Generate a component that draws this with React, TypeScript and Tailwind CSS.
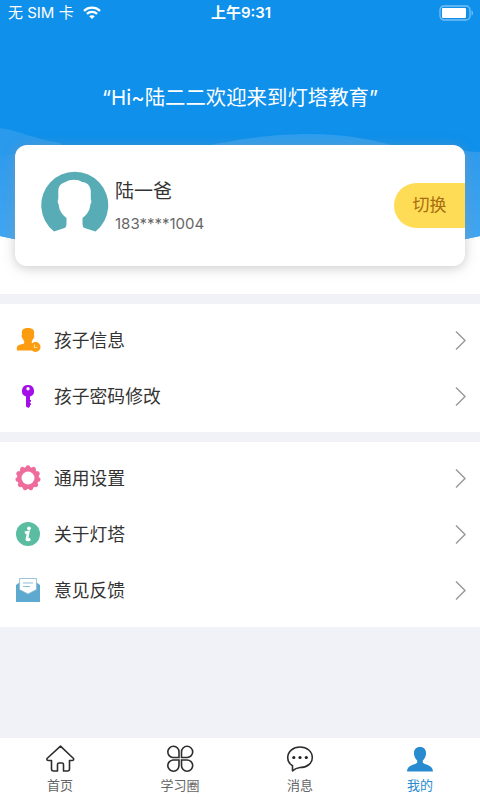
import type { ReactNode } from "react";

interface MenuItem {
  label: string;
  icon: ReactNode;
}

interface TabItem {
  label: string;
  icon: ReactNode;
  active?: boolean;
}

function WifiIcon() {
  return (
    <svg width="18" height="14" viewBox="0 0 18 14" fill="none">
      <path d="M1 4.8C5.5 0.6 12.5 0.6 17 4.8" stroke="#fff" strokeWidth="2.3" />
      <path d="M3.9 7.9C6.8 5.2 11.2 5.2 14.1 7.9" stroke="#fff" strokeWidth="2.2" />
      <path d="M9 13L6.2 10.2C7.8 8.8 10.2 8.8 11.8 10.2Z" fill="#fff" />
    </svg>
  );
}

function BatteryIcon() {
  return (
    <svg width="35" height="16" viewBox="0 0 35 16" fill="none">
      <rect x="1" y="1" width="30" height="14" rx="4" stroke="#79bff5" strokeWidth="1.3" />
      <rect x="3" y="3" width="24" height="10" rx="1" fill="#fff" />
      <path d="M32.5 5.5C34.5 6 34.5 10 32.5 10.5Z" fill="#79bff5" />
    </svg>
  );
}

function HeaderWaves() {
  return (
    <svg className="absolute left-0 top-0" width="480" height="260" viewBox="0 0 480 260">
      <defs>
        <linearGradient id="wave" x1="0" y1="150" x2="0" y2="240" gradientUnits="userSpaceOnUse">
          <stop offset="0" stopColor="#2e9bee" />
          <stop offset="1" stopColor="#42a6f1" />
        </linearGradient>
      </defs>
      <path d="M0 0H480V236Q240 290 0 236Z" fill="#0f90eb" />
      <path d="M0 128C20 131 35 139 60 143L80 160H0Z" fill="#2a9aed" />
      <path d="M205 146C250 137 280 134 310 134C345 134 370 139 395 146Z" fill="#2f9eee" />
      <path d="M0 156Q12 154 30 153L450 148Q465 152 480 152V236Q240 290 0 236Z" fill="url(#wave)" />
    </svg>
  );
}

function Avatar() {
  return (
    <svg width="68" height="70" viewBox="0 0 68 70">
      <path
        d="M13 60.5A33.5 33.5 0 1 1 54.5 60.5L43.5 57Q41.5 56 41.5 53V47Q46 44 48.5 38L49.5 33Q51 31 49.8 28V20C49.3 14 46 11.5 41 11C37 8 29 8 24.500 11C19 12.500 17.500 16 17.300 20V28Q16 31 17.500 33L18.500 38Q21 44 25.500 47V53Q25.500 56 23.500 57Z"
        fill="#58acb5"
      />
    </svg>
  );
}

function ChildIcon() {
  return (
    <svg width="26" height="26" viewBox="0 0 26 26">
      <path
        d="M7 7C6 2.5 9 1 13 1C17.5 1 20 3 19 7.5C20 10 18.5 11 17.5 13Q16 15 17 16.5L23 18.5V23.5H2Q1 19 4 18L9 16.5Q10 15 8.5 13C7.5 11 6 10 7 7Z"
        fill="#fc9c10"
      />
      <circle cx="20.5" cy="20" r="5" fill="#fc9c10" />
      <path d="M19.5 17.5V20.5H22.5" stroke="#ffd890" strokeWidth="1.2" fill="none" />
    </svg>
  );
}

function KeyIcon() {
  return (
    <svg width="26" height="26" viewBox="0 0 26 26">
      <path
        fillRule="evenodd"
        d="M13 2A5.9 5.9 0 0 1 15 13.5V23.5L13.4 25L11 23.5V13.5A5.9 5.9 0 0 1 13 2ZM13 4A1.7 1.7 0 1 0 13 7.4A1.7 1.7 0 1 0 13 4Z"
        fill="#a40fe8"
      />
      <path d="M15 17h1v1.8h-1zM15 20.2h1V22h-1z" fill="#a40fe8" />
    </svg>
  );
}

function GearIcon() {
  const teeth = Array.from({ length: 11 }, (_, i) => (i * 360) / 11);
  return (
    <svg width="26" height="26" viewBox="0 0 26 26">
      <circle cx="13" cy="13" r="8.7" fill="none" stroke="#ee6c9c" strokeWidth="4.4" />
      {teeth.map((angle) => (
        <circle key={angle} cx="13" cy="2.6" r="2.3" fill="#ee6c9c" transform={`rotate(${angle} 13 13)`} />
      ))}
    </svg>
  );
}

function InfoIcon() {
  return (
    <svg width="26" height="26" viewBox="0 0 26 26">
      <circle cx="13" cy="13" r="12" fill="#5abca0" />
      <circle cx="14" cy="7.3" r="1.9" fill="#fff" />
      <path d="M9.8 11.8L13.3 11L11.8 18.5Q12.3 19.6 15.3 18" stroke="#fff" strokeWidth="2.6" fill="none" />
    </svg>
  );
}

function MailIcon() {
  return (
    <svg width="26" height="26" viewBox="0 0 26 26">
      <path d="M1 8L5 5V1.5H21V5L25 8V25H1Z" fill="#5ea9cf" />
      <path d="M4.5 1.5H21.5V12.5L13 17L4.5 12.5Z" fill="#fff" stroke="#8cb9cf" strokeWidth="0.8" />
      <path d="M8 6H18M8 9.5H15" stroke="#8cbdd7" strokeWidth="1.2" />
    </svg>
  );
}

function Chevron() {
  return (
    <svg width="12" height="20" viewBox="0 0 12 20" fill="none">
      <path d="M1 1.5L10 10.5L1 19.5" stroke="#9c9c9c" strokeWidth="1.5" />
    </svg>
  );
}

function HomeIcon() {
  return (
    <svg width="30" height="30" viewBox="0 0 30 30" fill="none" stroke="#2d2d2d" strokeWidth="1.6" strokeLinejoin="round">
      <path d="M15.5 2.2L28.5 14.5Q29 16.500 27 16.500H24.500V25Q24.500 27 22.500 27H18.500V20.500Q18.500 19 17 19H14Q12.500 19 12.500 20.500V27H8.500Q6.500 27 6.500 25V16.500H3.500Q1.500 16.500 2 14.500Z" />
    </svg>
  );
}

function CloverIcon() {
  return (
    <svg width="30" height="30" viewBox="0 0 30 30" fill="none" stroke="#2d2d2d" strokeWidth="1.6">
      <path d="M14 13.5H8A5.6 5.6 0 1 1 14 8Z" />
      <path d="M16.5 13.5H22A5.6 5.6 0 1 0 16.5 8Z" />
      <path d="M14 16H8A5.6 5.6 0 1 0 14 21.5Z" />
      <path d="M16.5 16H22A5.6 5.6 0 1 1 16.5 21.5Z" />
    </svg>
  );
}

function MessageIcon() {
  return (
    <svg width="30" height="30" viewBox="0 0 30 30">
      <path
        d="M7.5 26.8V21.8C4.5 20 2.7 17.2 2.7 13.7C2.7 7.5 8 3 15 3S27.3 7.5 27.3 13.5S22 23.5 15 23.5Q10.5 24 7.5 26.8Z"
        fill="none"
        stroke="#2d2d2d"
        strokeWidth="1.6"
        strokeLinejoin="round"
      />
      <circle cx="8.8" cy="13.5" r="1.6" fill="#222" />
      <circle cx="15" cy="13.5" r="1.6" fill="#222" />
      <circle cx="21.3" cy="13.5" r="1.6" fill="#222" />
    </svg>
  );
}

function MineIcon() {
  return (
    <svg width="30" height="30" viewBox="0 0 30 30">
      <path
        d="M15 3C19.5 3 21.3 6 21 10C20.7 13 19.5 15 17.8 16.5V18.5C19 21 28 20.5 28 27.5H2C2 20.5 11 21 12.2 18.5V16.5C10.5 15 9.3 13 9 10C8.7 6 10.5 3 15 3Z"
        fill="#288bd0"
      />
    </svg>
  );
}

const childItems: MenuItem[] = [
  { label: "孩子信息", icon: <ChildIcon /> },
  { label: "孩子密码修改", icon: <KeyIcon /> },
];

const settingItems: MenuItem[] = [
  { label: "通用设置", icon: <GearIcon /> },
  { label: "关于灯塔", icon: <InfoIcon /> },
  { label: "意见反馈", icon: <MailIcon /> },
];

const tabs: TabItem[] = [
  { label: "首页", icon: <HomeIcon /> },
  { label: "学习圈", icon: <CloverIcon /> },
  { label: "消息", icon: <MessageIcon /> },
  { label: "我的", icon: <MineIcon />, active: true },
];

function MenuSection({ items }: { items: MenuItem[] }) {
  return (
    <ul className="bg-white pt-2 pb-2 last:pb-[9px]">
      {items.map((item) => (
        <li key={item.label} className="flex h-14 items-center pr-[13px] pl-[15px]">
          {item.icon}
          <span className="ml-[13px] flex-1 pt-[3px] text-[17.8px] text-[#333]">{item.label}</span>
          <Chevron />
        </li>
      ))}
    </ul>
  );
}

export default function App() {
  return (
    <div className="flex h-[800px] w-[480px] flex-col overflow-hidden bg-[#f1f2f7] font-['Inter','Noto_Sans_CJK_SC',sans-serif]">
      <header className="relative h-[294px] bg-white">
        <HeaderWaves />
        <div className="relative flex h-[26px] items-center justify-between pr-[6px] pl-2 text-white">
          <div className="flex flex-1 items-center gap-[9px]">
            <span className="pt-px text-[15px]">无 SIM 卡</span>
            <WifiIcon />
          </div>
          <span className="pt-px text-[15px] font-semibold">上午9:31</span>
          <div className="flex flex-1 justify-end">
            <BatteryIcon />
          </div>
        </div>
        <h1 className="relative mt-[57px] text-center text-[20.4px] leading-[30px] text-white">
          “Hi~陆二二欢迎来到灯塔教育”
        </h1>
        <div className="relative mx-[15px] mt-8 flex h-[121px] items-center rounded-xl bg-white pl-[26px] shadow-[0_2px_12px_rgba(150,150,150,0.5)]">
          <Avatar />
          <div className="ml-[6px] flex-1 pt-[2px]">
            <p className="text-[19px] leading-7 text-[#333]">陆一爸</p>
            <p className="mt-[6px] text-[15px] leading-6 text-[#666]">183****1004</p>
          </div>
          <button className="h-[45px] w-[71px] rounded-l-full bg-[#ffdc56] pt-px text-[17px] text-[#a76d10]">切换</button>
        </div>
      </header>

      <main className="flex flex-1 flex-col gap-[10px] pt-[10px]">
        <MenuSection items={childItems} />
        <MenuSection items={settingItems} />
      </main>

      <nav className="flex h-[62px] bg-white">
        {tabs.map((tab) => (
          <div
            key={tab.label}
            className={`flex flex-1 flex-col items-center pt-[6px] text-[13px] leading-5 ${
              tab.active ? "text-[#288bd0]" : "text-[#666]"
            }`}
          >
            {tab.icon}
            <span className="mt-px">{tab.label}</span>
          </div>
        ))}
      </nav>
    </div>
  );
}
